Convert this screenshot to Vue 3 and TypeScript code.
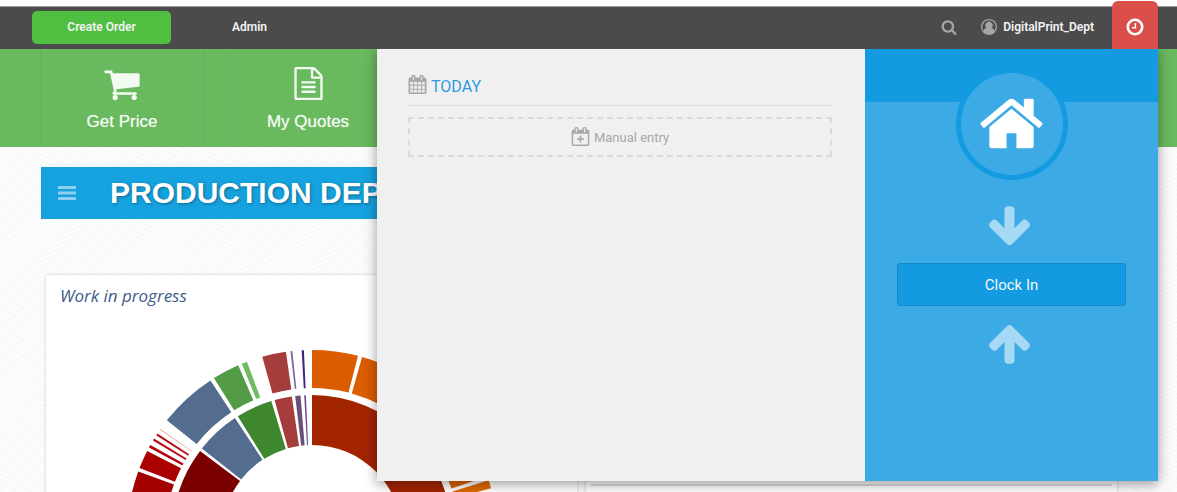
<script setup lang="ts">
interface Segment {
  from: number
  to: number
  color: string
}

interface Slice {
  d: string
  color: string
}

const outerRing: Segment[] = [
  { from: -90, to: -69.9, color: '#a30000' },
  { from: -68.8, to: -63, color: '#ac0000' },
  { from: -61.8, to: -60.9, color: '#b80010' },
  { from: -59.3, to: -58.6, color: '#bd0c14' },
  { from: -57.4, to: -56.7, color: '#bd0c14' },
  { from: -55.3, to: -55, color: '#e9a3a3' },
  { from: -51.7, to: -33.3, color: '#546c8e' },
  { from: -32, to: -23.5, color: '#549b48' },
  { from: -22.3, to: -20.6, color: '#6fba63' },
  { from: -15.6, to: -8.1, color: '#a63d3d' },
  { from: -6.7, to: -6.1, color: '#80699a' },
  { from: -3.2, to: -2.5, color: '#46217a' },
  { from: 0, to: 14.4, color: '#dc5c00' },
  { from: 15.7, to: 40, color: '#dc5c00' },
  { from: 41.2, to: 71.6, color: '#dc6400' },
  { from: 72.8, to: 75.4, color: '#e06a00' },
  { from: 76.6, to: 90, color: '#e06a00' },
]

const innerRing: Segment[] = [
  { from: -90, to: -53.1, color: '#7b0000' },
  { from: -51.9, to: -33.4, color: '#546c8e' },
  { from: -32, to: -16.9, color: '#3f872f' },
  { from: -15.5, to: -8.3, color: '#a63d3d' },
  { from: -6.9, to: -4.7, color: '#6a5079' },
  { from: -3.2, to: -2.5, color: '#6c4a94' },
  { from: 0, to: 90, color: '#a32500' },
]

function point(radius: number, angle: number): string {
  const rad = (angle * Math.PI) / 180
  return `${(radius * Math.sin(rad)).toFixed(2)} ${(-radius * Math.cos(rad)).toFixed(2)}`
}

function toSlices(ring: Segment[], outer: number, inner: number): Slice[] {
  return ring.map(({ from, to, color }) => ({
    color,
    d: `M${point(outer, from)}A${outer} ${outer} 0 0 1 ${point(outer, to)}L${point(inner, to)}A${inner} ${inner} 0 0 0 ${point(inner, from)}Z`,
  }))
}

const slices: Slice[] = [...toSlices(outerRing, 185, 147), ...toSlices(innerRing, 140, 90)]

const navItems = [
  {
    label: 'Get Price',
    size: 38,
    path: 'M704 1536q0 52-38 90t-90 38-90-38-38-90 38-90 90-38 90 38 38 90zm896 0q0 52-38 90t-90 38-90-38-38-90 38-90 90-38 90 38 38 90zm128-1088v512q0 24-16.5 42.5t-40.5 21.5l-1044 122q13 60 13 70 0 16-24 64h920q26 0 45 19t19 45-19 45-45 19h-1024q-26 0-45-19t-19-45q0-11 8-31.5t16-36 21.5-40 15.5-29.5l-177-823h-204q-26 0-45-19t-19-45 19-45 45-19h256q16 0 28.5 6.500t19.500 15.500 13 24.500 8 26 5.500 29.500 4.500 26h1201q26 0 45 19t19 45z',
  },
  {
    label: 'My Quotes',
    size: 33,
    path: 'M1596 380q28 28 48 76t20 88v1152q0 40-28 68t-68 28h-1344q-40 0-68-28t-28-68v-1600q0-40 28-68t68-28h896q40 0 88 20t76 48zm-444-244v376h376q-10-29-22-41l-313-313q-12-12-41-22zm384 1528v-1024h-416q-40 0-68-28t-28-68v-416h-768v1536h1280zm-1024-864q0-14 9-23t23-9h704q14 0 23 9t9 23v64q0 14-9 23t-23 9h-704q-14 0-23-9t-9-23v-64zm736 224q14 0 23 9t9 23v64q0 14-9 23t-23 9h-704q-14 0-23-9t-9-23v-64q0-14 9-23t23-9h704zm0 256q14 0 23 9t9 23v64q0 14-9 23t-23 9h-704q-14 0-23-9t-9-23v-64q0-14 9-23t23-9h704z',
  },
]
</script>

<template>
  <div class="page">
    <header class="topbar">
      <button class="create" type="button">Create Order</button>
      <a class="admin" href="#">Admin</a>
      <button class="search" type="button" aria-label="Search">
        <svg width="16" height="16" viewBox="0 0 1792 1792" fill="currentColor">
          <path d="M1216 832q0-185-131.500-316.500t-316.500-131.500-316.500 131.500-131.500 316.500 131.500 316.500 316.500 131.500 316.500-131.500 131.500-316.500zm512 832q0 52-38 90t-90 38q-54 0-90-38l-343-342q-179 124-399 124-143 0-273.500-55.500t-225-150-150-225-55.500-273.500 55.500-273.500 150-225 225-150 273.500-55.500 273.500 55.500 225 150 150 225 55.500 273.500q0 220-124 399l343 343q37 37 37 90z" />
        </svg>
      </button>
      <a class="user" href="#">
        <svg width="16" height="16" viewBox="0 0 16 16">
          <circle cx="8" cy="8" r="8" fill="#a5a5a5" />
          <path d="M8 1.300A6.700 6.700 0 0 0 2.600 11.900C3.100 10.200 4 9 5.400 8.700A3.600 3.600 0 1 1 10.600 8.700C12 9 12.900 10.200 13.400 11.900A6.700 6.700 0 0 0 8 1.300Z" fill="#4b4b4b" />
        </svg>
        <span>DigitalPrint_Dept</span>
      </a>
      <button class="clock-tab" type="button" aria-label="Time clock">
        <svg width="18" height="18" viewBox="0 0 18 18" fill="none" stroke="#fff">
          <circle cx="9" cy="9" r="7.200" stroke-width="2.600" />
          <path d="M9.400 5v4.700H6" stroke-width="1.500" />
        </svg>
      </button>

      <section class="popup">
        <div class="entries">
          <h2 class="today">
            <svg width="19" height="19" viewBox="0 0 1792 1792" fill="currentColor" stroke="currentColor" stroke-width="30">
              <path d="M192 1664h288v-288h-288v288zm352 0h320v-288h-320v288zm-352-352h288v-320h-288v320zm352 0h320v-320h-320v320zm-352-384h288v-288h-288v288zm736 736h320v-288h-320v288zm-384-736h320v-288h-320v288zm768 736h288v-288h-288v288zm-384-352h320v-320h-320v320zm-352-864v-288q0-13-9.500-22.500t-22.500-9.500h-64q-13 0-22.500 9.500t-9.500 22.500v288q0 13 9.500 22.500t22.500 9.500h64q13 0 22.500-9.500t9.500-22.500zm736 864h288v-320h-288v320zm-384-384h320v-288h-320v288zm384 0h288v-288h-288v288zm32-480v-288q0-13-9.500-22.500t-22.500-9.500h-64q-13 0-22.500 9.500t-9.500 22.500v288q0 13 9.500 22.500t22.500 9.500h64q13 0 22.500-9.500t9.500-22.500zm384-64v1280q0 52-38 90t-90 38h-1408q-52 0-90-38t-38-90v-1280q0-52 38-90t90-38h128v-96q0-66 47-113t113-47h64q66 0 113 47t47 113v96h384v-96q0-66 47-113t113-47h64q66 0 113 47t47 113v96h128q52 0 90 38t38 90z" />
            </svg>
            <span>TODAY</span>
          </h2>
          <button class="manual" type="button">
            <svg width="19" height="19" viewBox="0 0 1792 1792" fill="currentColor" fill-rule="evenodd">
              <path d="M1728 384v1280q0 52-38 90t-90 38h-1408q-52 0-90-38t-38-90v-1280q0-52 38-90t90-38h128v-96q0-66 47-113t113-47h64q66 0 113 47t47 113v96h384v-96q0-66 47-113t113-47h64q66 0 113 47t47 113v96h128q52 0 90 38t38 90zM208 640v1008h1376v-1008zM480 128h64q32 0 32 32v288q0 32-32 32h-64q-32 0-32-32v-288q0-32 32-32zM1248 128h64q32 0 32 32v288q0 32-32 32h-64q-32 0-32-32v-288q0-32 32-32z" />
              <path d="M816 832h160v240h240v160h-240v240h-160v-240h-240v-160h240z" />
            </svg>
            <span>Manual entry</span>
          </button>
        </div>
        <div class="clock">
          <div class="badge">
            <svg width="69" height="69" viewBox="0 0 1792 1792" fill="#fff">
              <path d="M1472 992v480q0 26-19 45t-45 19h-384v-384h-256v384h-384q-26 0-45-19t-19-45v-480q0-1 .5-3t.5-3l575-474 575 474q1 2 1 6zm223-69l-62 74q-8 9-21 11h-3q-13 0-21-7l-692-577-692 577q-12 8-24 7-13-2-21-11l-62-74q-8-10-7-23.500t11-21.500l719-599q32-26 76-26t76 26l244 204v-195q0-14 9-23t23-9h192q14 0 23 9t9 23v408l219 182q10 8 11 21.500t-7 23.500z" />
            </svg>
          </div>
          <svg class="arrow" width="47" height="47" viewBox="0 0 1792 1792">
            <path d="M1675 832q0 53-37 90l-651 652q-39 37-91 37-53 0-90-37l-651-652q-38-36-38-90 0-53 38-91l74-75q39-37 91-37 53 0 90 37l294 294v-704q0-52 38-90t90-38h128q52 0 90 38t38 90v704l294-294q37-37 90-37 52 0 91 37l75 75q37 39 37 91z" />
          </svg>
          <button class="clock-in" type="button">Clock In</button>
          <svg class="arrow" width="47" height="47" viewBox="0 0 1792 1792">
            <path d="M1675 971q0 51-37 90l-75 75q-38 38-91 38-54 0-90-38l-294-293v704q0 52-37.500 84.500t-90.500 32.500h-128q-53 0-90.500-32.500t-37.500-84.500v-704l-294 293q-36 38-90 38t-90-38l-75-75q-38-38-38-90 0-53 38-91l651-651q35-37 90-37 54 0 91 37l651 651q37 39 37 91z" />
          </svg>
        </div>
      </section>
    </header>

    <nav class="nav">
      <a v-for="item in navItems" :key="item.label" class="nav-item" href="#">
        <span class="nav-icon">
          <svg :width="item.size" :height="item.size" viewBox="0 0 1792 1792" fill="currentColor">
            <path :d="item.path" />
          </svg>
        </span>
        <span>{{ item.label }}</span>
      </a>
    </nav>

    <main class="content">
      <div class="banner">
        <button class="menu" type="button" aria-label="Menu">
          <svg width="18" height="14" viewBox="0 0 18 14" fill="#8fd0f0">
            <path d="M0 0h18v3H0zM0 5.500h18v3H0zM0 11h18v3H0z" />
          </svg>
        </button>
        <h1>PRODUCTION DEP</h1>
      </div>
      <div class="cards">
        <section class="card">
          <h3>Work in progress</h3>
          <svg class="chart" width="370" height="185" viewBox="-185 -185 370 185">
            <path v-for="(slice, i) in slices" :key="i" :d="slice.d" :fill="slice.color" />
          </svg>
        </section>
        <section class="card side">
          <hr />
        </section>
      </div>
    </main>
  </div>
</template>

<style>
html,
body {
  overflow: hidden;
}
</style>

<style scoped>
* {
  box-sizing: border-box;
}

button {
  padding: 0;
  border: 0;
  background: none;
  font: inherit;
  color: inherit;
}

a {
  color: inherit;
  text-decoration: none;
}

svg {
  display: block;
  flex: none;
}

h1,
h2,
h3 {
  margin: 0;
  font-weight: 400;
}

.page {
  height: 100vh;
  overflow: hidden;
  padding-top: 6px;
  background:
    linear-gradient(#fff 0 6px, transparent 6px),
    repeating-linear-gradient(135deg, rgba(0, 0, 0, 0.016) 0 1px, transparent 1px 3px),
    repeating-linear-gradient(20deg, rgba(0, 0, 0, 0.012) 0 2px, transparent 2px 5px),
    #fdfdfd;
  font-family: Roboto, "Liberation Sans", sans-serif;
}

.topbar {
  position: relative;
  z-index: 2;
  display: flex;
  align-items: center;
  height: 43px;
  padding: 0 19px 2px 32px;
  border-top: 1px solid #999;
  background: #4b4b4b;
  color: #f4f4f4;
  font-size: 12px;
  font-weight: 600;
}

.create {
  width: 139px;
  height: 33px;
  border-radius: 5px;
  background: #50be41;
}

.admin {
  margin-left: 61px;
}

.search {
  margin-left: auto;
  color: #a5a5a5;
}

.user {
  display: flex;
  align-items: center;
  gap: 6px;
  margin: 0 18px 0 24px;
}

.clock-tab {
  display: flex;
  align-items: center;
  justify-content: center;
  align-self: stretch;
  width: 46px;
  margin: -6px 0 -2px;
  padding-top: 4px;
  border-radius: 6px 6px 0 0;
  background: #db4f4a;
}

.popup {
  position: absolute;
  top: 100%;
  right: 19px;
  display: grid;
  grid-template-columns: 5fr 3fr;
  width: 781px;
  max-width: calc(100% - 19px);
  min-height: 432px;
  background: #f0f0f0;
  box-shadow: 0 3px 12px rgba(0, 0, 0, 0.4);
  clip-path: inset(0 -20px -20px -20px);
  font-weight: 400;
}

.entries {
  padding: 23px 33px 0 31px;
}

.today {
  display: flex;
  align-items: center;
  gap: 4px;
  height: 34px;
  margin-bottom: 11px;
  padding-bottom: 8px;
  border-bottom: 1px solid #dedede;
  color: #a8a8a8;
  font-size: 16px;
}

.today span {
  padding-top: 3px;
  color: #2f9ae0;
}

.manual {
  display: flex;
  align-items: center;
  justify-content: center;
  gap: 4px;
  width: 100%;
  height: 40px;
  padding-bottom: 2px;
  border: 2px dashed #dadada;
  color: #a8a8a8;
  font-size: 13px;
}

.manual span {
  padding-top: 3px;
}

.clock {
  display: flex;
  flex-direction: column;
  align-items: center;
  padding: 19px 32px 0;
  background: linear-gradient(#149ae0 0 53px, #3baae5 53px);
}

.badge {
  display: flex;
  align-items: center;
  justify-content: center;
  width: 112px;
  height: 112px;
  padding-bottom: 2px;
  border: 5px solid #149ae0;
  border-radius: 50%;
  background: #3baae5;
}

.arrow {
  margin: 23px 4px 13px 0;
  fill: #a6d9f4;
}

.clock-in {
  width: 100%;
  height: 43px;
  border: 1px solid #118acb;
  border-radius: 3px;
  background: #149ae0;
  color: #f2f8fc;
  font-size: 15px;
}

.clock-in + .arrow {
  margin-top: 14px;
}

.nav {
  display: flex;
  gap: 22px;
  height: 98px;
  padding-left: 40px;
  background: #69b95f;
}

.nav-item {
  width: 164px;
  padding-top: 16px;
  border: 1px solid #65b45b;
  border-top: 0;
  color: #f3faf2;
  font-family: "Liberation Sans", sans-serif;
  font-size: 17px;
  line-height: 20px;
  text-align: center;
  text-shadow: 0 0 1px rgba(255, 255, 255, 0.6);
}

.nav-icon {
  display: flex;
  align-items: center;
  justify-content: center;
  height: 37px;
  margin-bottom: 10px;
}

.content {
  padding: 20px 41px 0;
}

.banner {
  display: flex;
  align-items: center;
  gap: 34px;
  height: 52px;
  padding-left: 16px;
  border: 1px solid #1c9cd6;
  background: #15a2de;
}

.banner h1 {
  color: #fff;
  font-family: "Liberation Sans", sans-serif;
  font-size: 30px;
  font-weight: 700;
  white-space: nowrap;
  text-shadow: 1px 1px 3px rgba(0, 0, 0, 0.35);
}

.cards {
  display: flex;
  gap: 9px;
  padding: 56px 19px 0 5px;
}

.card {
  flex: 1;
  background: #fff;
  box-shadow: 0 0 3px rgba(0, 0, 0, 0.2);
}

.card h3 {
  padding: 10px 14px 0;
  color: #3c5a8a;
  font-family: "Open Sans", sans-serif;
  font-size: 17px;
  font-style: italic;
  line-height: 22px;
}

.chart {
  margin: 43px auto 0;
}

.side {
  padding-top: 209px;
}

.side hr {
  margin: 0 5px;
  border: 0;
  border-top: 2px solid #ddd;
}
</style>
